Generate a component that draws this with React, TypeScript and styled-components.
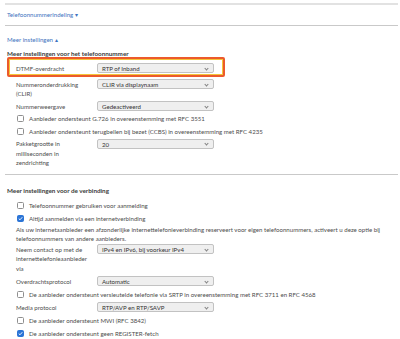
import styled, { createGlobalStyle } from "styled-components";

const GlobalStyle = createGlobalStyle`
    body {
        margin: 0;
        background: #ffffff;
        font-family: Lato, "Liberation Sans", sans-serif;
        color: #4d4d4d;
    }
`;

const Page = styled.main`
    width: 393px;
    padding: 3px 2px 0 5px;
    font-size: 6.1px;
`;

const Rule = styled.div<{ $light?: boolean; $top?: number }>`
    height: ${(p) => (p.$light ? "2px" : "1px")};
    margin-top: ${(p) => p.$top ?? 0}px;
    background: ${(p) => (p.$light ? "#e2e2e2" : "#c9c9c9")};
`;

const ToggleLink = styled.a<{ $top: number }>`
    display: block;
    margin-top: ${(p) => p.$top}px;
    padding: 0 2px;
    line-height: 10px;
    color: #3e73c0;
    text-decoration: none;
`;

const Heading = styled.h3<{ $top: number }>`
    margin: ${(p) => p.$top}px 0 0;
    padding: 0 2px;
    font-size: 6.3px;
    font-weight: 700;
    line-height: 10px;
    color: #3a3a3a;
`;

const Section = styled.section<{ $gap: number; $top?: number }>`
    display: flex;
    flex-direction: column;
    gap: ${(p) => p.$gap}px;
    margin-top: ${(p) => p.$top ?? 0}px;
    padding-left: 2px;
`;

// orange annotation frame round the DTMF row
const Highlight = styled.div`
    margin: -2px 173px -0.5px 0;
    padding: 4px 0 2px 7px;
    border: 2px solid #ec5a2b;
    border-radius: 2px;
    box-shadow: inset 0 0 0 1px #f4c43a;
`;

const Field = styled.div`
    display: grid;
    grid-template-columns: 81px 117px;
    align-items: start;
    padding-left: 9px;
`;

const InBox = styled(Field)`
    padding-left: 0;
`;

const Label = styled.span`
    line-height: 9.5px;
    padding-top: 0.5px;
`;

const Select = styled.div`
    position: relative;
    height: 10px;
    box-sizing: border-box;
    padding-left: 4px;
    line-height: 9px;
    background: #efefef;
    border: 1px solid #c2c2c2;
    border-radius: 2px;
    color: #333;

    &::after {
        content: "";
        position: absolute;
        right: 5px;
        top: 2.5px;
        width: 2px;
        height: 2px;
        border-right: 1px solid #808080;
        border-bottom: 1px solid #808080;
        transform: rotate(45deg);
    }
`;

const Check = styled.label`
    display: flex;
    align-items: center;
    gap: 5px;
    padding-left: 10px;
    height: 10px;
    white-space: nowrap;
`;

const Box = styled.span<{ $on?: boolean }>`
    display: inline-flex;
    align-items: center;
    justify-content: center;
    width: 7px;
    height: 7px;
    box-sizing: border-box;
    border-radius: 1.5px;
    border: 1px solid ${(p) => (p.$on ? "#2b74d6" : "#8f8f8f")};
    background: ${(p) => (p.$on ? "#2b74d6" : "#fff")};
`;

const Note = styled.p`
    margin: 0 0 -2px;
    padding-left: 9px;
    line-height: 8.5px;
`;

function Checkbox({ on, children }: { on?: boolean; children: string }) {
    return (
        <Check>
            <Box $on={on}>
                {on && (
                    <svg width="5" height="5" viewBox="0 0 10 10">
                        <path d="M1.5 5.2 L4 7.6 L8.6 2.4" fill="none" stroke="#fff" strokeWidth="1.8" />
                    </svg>
                )}
            </Box>
            {children}
        </Check>
    );
}

export default function App() {
    return (
        <>
            <GlobalStyle />
            <Page>
                <Rule $light />
                <ToggleLink $top={5}>Telefoonnummerindeling ▾</ToggleLink>
                <Rule $top={5} />
                <ToggleLink $top={9}>Meer instellingen ▴</ToggleLink>
                <Heading $top={4}>Meer instellingen voor het telefoonnummer</Heading>
                <Section $gap={2.5}>
                    <Highlight>
                        <InBox>
                            <Label>DTMF-overdracht</Label>
                            <Select>RTP of Inband</Select>
                        </InBox>
                    </Highlight>
                    <Field>
                        <Label>Nummeronderdrukking<br />(CLIR)</Label>
                        <Select>CLIR via displaynaam</Select>
                    </Field>
                    <Field>
                        <Label>Nummerweergave</Label>
                        <Select>Gedeactiveerd</Select>
                    </Field>
                    <Checkbox>Aanbieder ondersteunt G.726 in overeenstemming met RFC 3551</Checkbox>
                    <Checkbox>Aanbieder ondersteunt terugbellen bij bezet (CCBS) in overeenstemming met RFC 4235</Checkbox>
                    <Field>
                        <Label>Pakketgrootte in<br />milliseconden in<br />zendrichting</Label>
                        <Select>20</Select>
                    </Field>
                </Section>
                <Rule $top={6.5} />
                <Heading $top={11}>Meer instellingen voor de verbinding</Heading>
                <Section $gap={3} $top={4}>
                    <Checkbox>Telefoonnummer gebruiken voor aanmelding</Checkbox>
                    <Checkbox on>Altijd aanmelden via een internetverbinding</Checkbox>
                    <Note>
                        Als uw internetaanbieder een afzonderlijke internettelefonieverbinding reserveert voor eigen telefoonnummers, activeert u deze optie bij telefoonnummers van andere aanbieders.
                    </Note>
                    <Field>
                        <Label>Neem contact op met de<br />internettelefonieaanbieder<br />via</Label>
                        <Select>IPv4 en IPv6, bij voorkeur IPv4</Select>
                    </Field>
                    <Field>
                        <Label>Overdrachtsprotocol</Label>
                        <Select>Automatic</Select>
                    </Field>
                    <Checkbox>De aanbieder ondersteunt versleutelde telefonie via SRTP in overeenstemming met RFC 3711 en RFC 4568</Checkbox>
                    <Field>
                        <Label>Media protocol</Label>
                        <Select>RTP/AVP en RTP/SAVP</Select>
                    </Field>
                    <Checkbox>De aanbieder ondersteunt MWI (RFC 3842)</Checkbox>
                    <Checkbox on>De aanbieder ondersteunt geen REGISTER-fetch</Checkbox>
                </Section>
            </Page>
        </>
    );
}
